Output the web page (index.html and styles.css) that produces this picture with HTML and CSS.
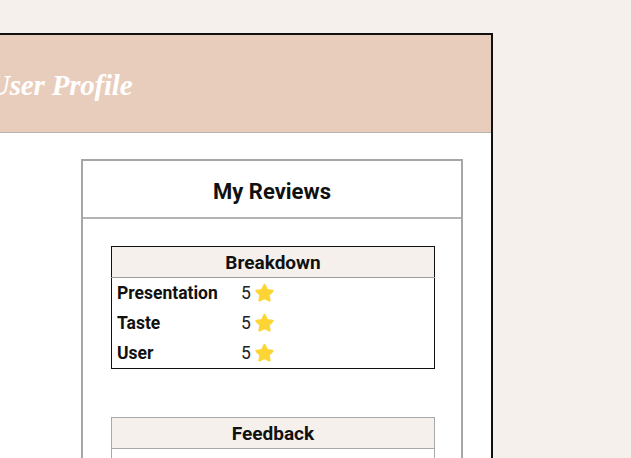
FILE: index.html
```html
<!DOCTYPE html>
<html>
<head>
<meta charset="utf-8">
<link rel="stylesheet" href="styles.css">
</head>
<body>
<div class="frame">
  <header class="frame-head">
    <h1 class="page-title">User Profile</h1>
  </header>
  <main class="frame-body">
    <section class="card">
      <h2 class="card-title">My Reviews</h2>
      <div class="card-body">
        <table class="tbl breakdown">
          <thead>
            <tr><th colspan="2">Breakdown</th></tr>
          </thead>
          <tbody>
            <tr><td class="lbl">Presentation</td><td class="val">5<svg class="star" viewBox="0 0 24 24"><path d="M12 3.2l2.6 5.3 5.8.8-4.2 4.1 1 5.8L12 16.5l-5.2 2.7 1-5.8-4.2-4.1 5.8-.8z"/></svg></td></tr>
            <tr><td class="lbl">Taste</td><td class="val">5<svg class="star" viewBox="0 0 24 24"><path d="M12 3.2l2.6 5.3 5.8.8-4.2 4.1 1 5.8L12 16.5l-5.2 2.7 1-5.8-4.2-4.1 5.8-.8z"/></svg></td></tr>
            <tr><td class="lbl">User</td><td class="val">5<svg class="star" viewBox="0 0 24 24"><path d="M12 3.2l2.6 5.3 5.8.8-4.2 4.1 1 5.8L12 16.5l-5.2 2.7 1-5.8-4.2-4.1 5.8-.8z"/></svg></td></tr>
          </tbody>
        </table>
        <table class="tbl feedback">
          <thead>
            <tr><th>Feedback</th></tr>
          </thead>
          <tbody>
            <tr><td class="fb">&nbsp;</td></tr>
          </tbody>
        </table>
      </div>
    </section>
  </main>
</div>
</body>
</html>
```

FILE: styles.css
```css
html, body {
  margin: 0;
  padding: 0;
  background: #f5f0ec;
  overflow: hidden;
  height: 458px;
}
body {
  font-family: Roboto, "Liberation Sans", sans-serif;
  color: #111;
}
.frame {
  margin-top: 33px;
  margin-left: -60px;
  width: 549px;
  border: 2px solid #111;
  background: #fff;
  height: 600px;
}
.frame-head {
  background: #e9cdbc;
  height: 98px;
  border-bottom: 1px solid #b9b2ae;
  display: flex;
  align-items: center;
  padding-left: 47px;
  padding-top: 3px;
  box-sizing: border-box;
}
.page-title {
  margin: 0;
  font-family: "Liberation Serif", "DejaVu Serif", serif;
  font-style: italic;
  font-weight: bold;
  font-size: 29px;
  color: #fff;
  letter-spacing: -0.2px;
}
.frame-body {
  padding-top: 26px;
  padding-left: 139px;
}
.card {
  width: 378px;
  border: 2px solid #a6a6a6;
  background: #fff;
}
.card-title {
  margin: 0;
  height: 58px;
  padding-top: 4px;
  box-sizing: border-box;
  display: flex;
  align-items: center;
  justify-content: center;
  font-size: 22px;
  font-weight: bold;
  border-bottom: 2px solid #b4b4b4;
}
.card-body {
  padding: 27px 26px 0 28px;
  display: flex;
  flex-direction: column;
  gap: 48px;
}
.tbl {
  width: 324px;
  border-collapse: collapse;
}
.breakdown {
  border: 1px solid #111;
}
.feedback {
  border: 1px solid #a9a9a9;
}
.tbl th {
  background: #f6f0ec;
  height: 30px;
  padding: 0;
  font-size: 19px;
  font-weight: bold;
  text-align: center;
}
.breakdown th {
  border-bottom: 1px solid #9a9a9a;
}
.feedback th {
  border-bottom: 1px solid #a9a9a9;
}
.tbl td {
  height: 30px;
  padding: 0 5px;
  font-size: 17.5px;
}
.lbl {
  font-weight: bold;
  width: 114px;
}
.val {
  display: flex;
  align-items: center;
  gap: 2px;
  height: 30px;
  color: #222;
  font-size: 18px;
}
.star {
  width: 23px;
  height: 23px;
  fill: #fcd535;
  stroke: #fcd535;
  stroke-width: 2.4;
  stroke-linejoin: round;
}
.fb {
  height: 40px;
}
```
